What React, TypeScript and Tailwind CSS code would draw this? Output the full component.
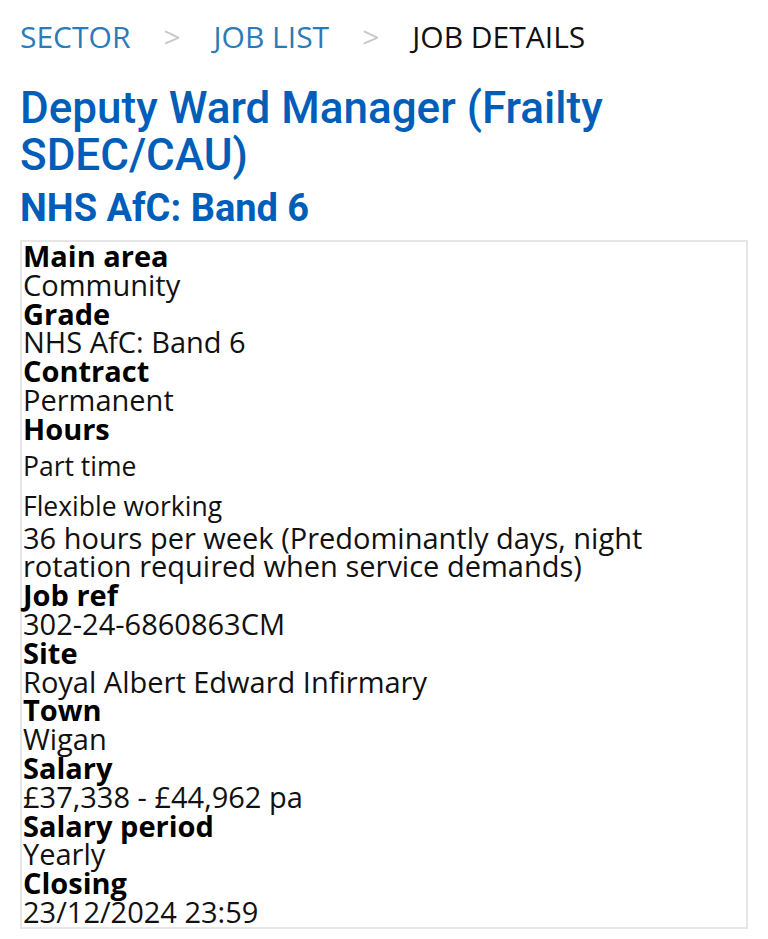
import React from "react";

function Label({ children }: { children: React.ReactNode }) {
  return <div className="font-bold leading-[28.8px] text-[29px] text-black">{children}</div>;
}
function Value({ children }: { children: React.ReactNode }) {
  return <div className="leading-[28.8px] text-[29px] text-[#111]">{children}</div>;
}

export default function App() {
  return (
    <div className="min-h-[939px] bg-white px-[20px]" style={{ fontFamily: '"Open Sans", sans-serif' }}>
      <div className="flex items-center pt-[16px] text-[30px] leading-[42px]">
        <span className="text-[#2b7bb9]">SECTOR</span>
        <span className="mx-[33px] text-[#c8c8c8]">&gt;</span>
        <span className="text-[#2b7bb9]">JOB LIST</span>
        <span className="mx-[33px] text-[#c8c8c8]">&gt;</span>
        <span className="text-[#111]">JOB DETAILS</span>
      </div>
      <h1
        className="mt-[27px] text-[44px] leading-[47px] font-medium text-[#005eb8]"
        style={{ fontFamily: "Roboto, sans-serif" }}
      >
        Deputy Ward Manager (Frailty SDEC/CAU)
      </h1>
      <h2
        className="mt-[9px] text-[38px] leading-[40px] font-bold text-[#005eb8]"
        style={{ fontFamily: "Roboto, sans-serif" }}
      >
        NHS AfC: Band 6
      </h2>
      <div className="mt-[12px] w-[728px] border-2 border-[#e6e6e6] pl-[1px]">
        <Label>Main area</Label>
        <Value>Community</Value>
        <Label>Grade</Label>
        <Value>NHS AfC: Band 6</Value>
        <Label>Contract</Label>
        <Value>Permanent</Value>
        <Label>Hours</Label>
        <div className="text-[26.5px] leading-[36px] text-[#111] mt-[4px]">Part time</div>
        <div className="text-[26.5px] leading-[36px] text-[#111] mt-[4px]">Flexible working</div>
        <div className="text-[29px] leading-[28.8px] text-[#111]">
          36 hours per week (Predominantly days, night rotation required when service demands)
        </div>
        <Label>Job ref</Label>
        <Value>302-24-6860863CM</Value>
        <Label>Site</Label>
        <Value>Royal Albert Edward Infirmary</Value>
        <Label>Town</Label>
        <Value>Wigan</Value>
        <Label>Salary</Label>
        <Value>£37,338 - £44,962 pa</Value>
        <Label>Salary period</Label>
        <Value>Yearly</Value>
        <Label>Closing</Label>
        <Value>23/12/2024 23:59</Value>
      </div>
    </div>
  );
}
